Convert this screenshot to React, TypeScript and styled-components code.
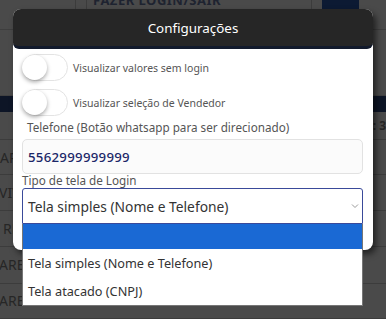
import React from "react";
import styled, { createGlobalStyle } from "styled-components";

const GlobalStyle = createGlobalStyle`
  html, body { margin: 0; padding: 0; }
  body {
    background: #4a4a4a;
    overflow: hidden;
    font-family: "Noto Sans", "DejaVu Sans", sans-serif;
  }
`;

const Page = styled.div`
  position: relative;
  width: 386px;
  height: 319px;
  overflow: hidden;
  background: #4a4a4a;
  display: flex;
  flex-direction: column;
`;

const TopBar = styled.div`
  height: 29px;
  display: flex;
  border-bottom: 1px solid #3e3e3e;
`;

const TopCell = styled.div<{ $w: number; $bg?: string; $line?: boolean }>`
  width: ${(p) => p.$w}px;
  flex-shrink: 0;
  overflow: hidden;
  background: ${(p) => p.$bg || "transparent"};
  border-right: ${(p) => (p.$line ? "1px solid #3c3c3c" : "none")};
`;

const FaintTitle = styled.div`
  margin: -9px 0 0 6px;
  color: #1e2330;
  font-size: 13px;
  font-weight: 700;
  letter-spacing: 0.5px;
  white-space: nowrap;
`;

const Spacer = styled.div<{ $h: number }>`
  height: ${(p) => p.$h}px;
  border-bottom: 1px solid #414141;
`;

const NavyBand = styled.div`
  height: 16px;
  background: #0d1526;
`;

const Row = styled.div<{ $h: number }>`
  height: ${(p) => p.$h}px;
  border-bottom: 1px solid #3c3c3c;
  display: flex;
  align-items: center;
  justify-content: space-between;
  font-size: 14px;
  color: #262626;
  overflow: hidden;
`;

const RowText = styled.span<{ $x: number }>`
  margin-left: ${(p) => p.$x}px;
  white-space: nowrap;
`;

const SideText = styled.span`
  color: #262626;
  font-size: 12px;
  font-weight: 700;
`;

const Modal = styled.div`
  position: absolute;
  left: 13px;
  top: 9px;
  width: 360px;
  height: 241px;
  background: #ffffff;
  border-radius: 8px;
  box-shadow: 3px 4px 6px rgba(0, 0, 0, 0.55);
  display: flex;
  flex-direction: column;
`;

const Header = styled.div`
  height: 37px;
  background: #262626;
  border-radius: 8px 8px 6px 6px;
  border-bottom: 3px solid #121a2c;
  display: flex;
  align-items: center;
  justify-content: center;
  color: #ffffff;
  font-size: 13.4px;
`;

const Body = styled.div`
  padding: 5px 10px 0 9px;
  display: flex;
  flex-direction: column;
`;

const ToggleRow = styled.label`
  display: flex;
  align-items: center;
  height: 27px;
  margin-bottom: 8px;
  gap: 5px;
  color: #555555;
  font-size: 10.5px;
  white-space: nowrap;
`;

const Switch = styled.span`
  position: relative;
  width: 44px;
  height: 25px;
  border: 1px solid #e3e3e3;
  border-radius: 14px;
  background: #ffffff;
  flex-shrink: 0;
`;

const Knob = styled.span`
  position: absolute;
  left: -1px;
  top: 0px;
  width: 25px;
  height: 25px;
  border-radius: 50%;
  background: #ffffff;
  box-shadow: 0 2px 4px rgba(0, 0, 0, 0.35);
`;

const FieldLabel = styled.div<{ $indent: number }>`
  color: #555555;
  font-size: 11.7px;
  padding-left: ${(p) => p.$indent}px;
  height: 15px;
  line-height: 15px;
  white-space: nowrap;
  margin-top: ${(p) => (p.$indent ? -4 : -1)}px;
`;

const Input = styled.div`
  margin-top: 4px;
  height: 33px;
  border: 1px solid #e2e2e2;
  border-radius: 5px;
  background: #fbfbfb;
  display: flex;
  align-items: center;
  padding-left: 5px;
  color: #1c2768;
  font-size: 13.2px;
  font-weight: 500;
  letter-spacing: 0.3px;
`;

const Select = styled.div`
  position: relative;
  height: 34px;
  border: 1px solid #3a4a9a;
  border-radius: 3px 3px 0 0;
  display: flex;
  align-items: center;
  justify-content: space-between;
  padding: 0 5px;
  color: #333333;
  font-size: 13.8px;
`;

const SelectValue = styled.span`
  white-space: nowrap;
`;

const Chevron = styled.svg`
  width: 8px;
  height: 6px;
  margin-right: -2px;
`;

const Menu = styled.div`
  position: absolute;
  left: -1px;
  right: -1px;
  top: 35px;
  background: #ffffff;
  border: 1px solid #767676;
  border-top: none;
  display: flex;
  flex-direction: column;
  z-index: 2;
`;

const Option = styled.div<{ $active?: boolean }>`
  height: ${(p) => (p.$active ? 25 : 28)}px;
  background: ${(p) => (p.$active ? "#1a69d4" : "#ffffff")};
  display: flex;
  align-items: center;
  padding-left: 5px;
  color: #333333;
  font-size: 12.7px;
  white-space: nowrap;
`;

export default function App() {
  return (
    <>
      <GlobalStyle />
      <Page>
        <TopBar>
          <TopCell $w={75} $line />
          <TopCell $w={10} $line />
          <TopCell $w={224} $line>
            <FaintTitle>FAZER LOGIN/SAIR</FaintTitle>
          </TopCell>
          <TopCell $w={10} />
          <TopCell $w={37} $bg="#0c1a33" />
          <TopCell $w={30} />
        </TopBar>
        <Spacer $h={67} />
        <NavyBand />
        <Row $h={27}>
          <span />
          <SideText>: 3</SideText>
        </Row>
        <Row $h={35}>
          <RowText $x={0}>ARE</RowText>
        </Row>
        <Row $h={35}>
          <RowText $x={-1}>VIV</RowText>
        </Row>
        <Row $h={36}>
          <RowText $x={3}>RE</RowText>
        </Row>
        <Row $h={36}>
          <RowText $x={-1}>ARE</RowText>
        </Row>
        <Row $h={35}>
          <RowText $x={-1}>ARE</RowText>
        </Row>

        <Modal>
          <Header>Configurações</Header>
          <Body>
            <ToggleRow>
              <Switch>
                <Knob />
              </Switch>
              Visualizar valores sem login
            </ToggleRow>
            <ToggleRow>
              <Switch>
                <Knob />
              </Switch>
              Visualizar seleção de Vendedor
            </ToggleRow>
            <FieldLabel $indent={5}>
              Telefone (Botão whatsapp para ser direcionado)
            </FieldLabel>
            <Input>5562999999999</Input>
            <FieldLabel $indent={0}>Tipo de tela de Login</FieldLabel>
            <Select>
              <SelectValue>Tela simples (Nome e Telefone)</SelectValue>
              <Chevron viewBox="0 0 8 6">
                <path d="M1 1.5 L4 4.5 L7 1.5" fill="none" stroke="#9a9a9a" strokeWidth="1" />
              </Chevron>
              <Menu>
                <Option $active />
                <Option>Tela simples (Nome e Telefone)</Option>
                <Option>Tela atacado (CNPJ)</Option>
              </Menu>
            </Select>
          </Body>
        </Modal>
      </Page>
    </>
  );
}
